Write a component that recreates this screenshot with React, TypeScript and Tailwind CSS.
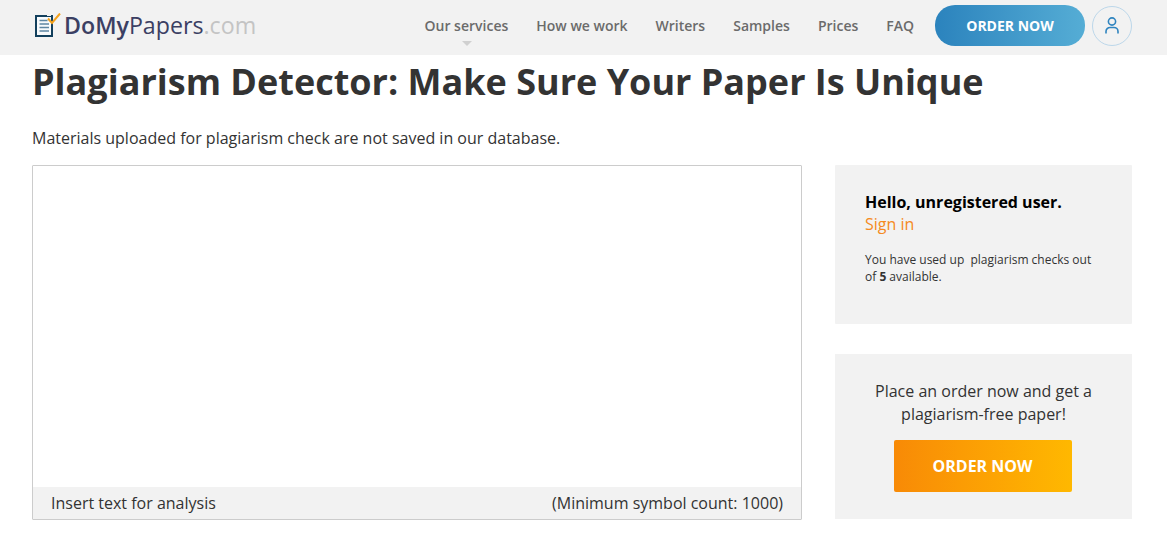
export default function App() {
  const font = { fontFamily: '"Open Sans", sans-serif' };
  return (
    <div className="w-[1167px] h-[543px] overflow-hidden bg-white text-[#333] relative" style={font}>
      <header className="h-[55px] bg-[#f2f2f2] flex items-center pl-[35px] pr-[35px] pb-[4px]">
        <div className="flex items-center gap-[3px]">
          <svg width="26" height="25" viewBox="0 0 26 25" className="mt-[-1px]">
            <rect x="1" y="3" width="16" height="20" fill="#f7fafc" stroke="#123f5c" strokeWidth="2" />
            <path d="M4.5 7.5h8M4.5 11h9.5M4.5 14.5h9.5M4.5 18h9.5" stroke="#5f87a3" strokeWidth="1.5" />
            <path d="M12 1h4v2h-4z" fill="#f2f2f2" />
            <path d="M13 5.5l4 4.5 8-9.5" fill="none" stroke="#f5a21c" strokeWidth="2" />
          </svg>
          <div className="text-[23.2px] leading-none text-[#3b3f63]">
            <span className="font-semibold">DoMy</span>
            <span>Papers</span>
            <span className="text-[#c4c4c4]">.com</span>
          </div>
        </div>
        <nav className="ml-auto flex items-center gap-[28px] text-[14px] font-semibold text-[#6b6b6b]">
          <a className="relative">
            Our services
            <span className="absolute left-[37px] top-[26px] w-0 h-0 border-l-[5px] border-r-[5px] border-t-[5px] border-l-transparent border-r-transparent border-t-[#d0d0d0]" />
          </a>
          <a>How we work</a>
          <a>Writers</a>
          <a>Samples</a>
          <a>Prices</a>
          <a>FAQ</a>
        </nav>
        <button className="ml-[21px] w-[150px] h-[41px] rounded-[20px] bg-gradient-to-r from-[#2b83bd] to-[#55add5] text-white text-[14px] font-bold">
          ORDER NOW
        </button>
        <div className="ml-[7px] w-[40px] h-[40px] rounded-full border border-[#bcd7ea] flex items-center justify-center">
          <svg width="14" height="17" viewBox="0 0 14 17" fill="none" stroke="#2f84bf" strokeWidth="1.6">
            <circle cx="7" cy="4.5" r="3.6" />
            <path d="M1 16.5v-2a4 4 0 0 1 4-4h4a4 4 0 0 1 4 4v2" />
          </svg>
        </div>
      </header>
      <main className="pl-[32px] pr-[35px]">
        <h1 className="mt-[2px] text-[36px] leading-[50px] font-bold text-[#333]">
          Plagiarism Detector: Make Sure Your Paper Is Unique
        </h1>
        <p className="mt-[20px] text-[16px] leading-[22px] text-[#333]">
          Materials uploaded for plagiarism check are not saved in our database.
        </p>
        <div className="mt-[16px] flex justify-between">
          <div className="w-[770px] h-[355px] border border-[#ccc] flex flex-col justify-end rounded-[1px]">
            <div className="h-[32px] bg-[#f2f2f2] flex items-center justify-between px-[18px] text-[16px] text-[#333]">
              <span>Insert text for analysis</span>
              <span>(Minimum symbol count: 1000)</span>
            </div>
          </div>
          <aside className="w-[297px] flex flex-col gap-[30px]">
            <div className="h-[159px] bg-[#f2f2f2] rounded-[1px] px-[30px] pt-[26px]">
              <div className="text-[16px] leading-[22px] font-bold text-black">Hello, unregistered user.</div>
              <div className="text-[16px] leading-[23px] text-[#f58a21]">Sign in</div>
              <p className="mt-[15px] text-[12px] leading-[17px] text-[#333] whitespace-pre-wrap">
                You have used up  plagiarism checks out of <b className="font-bold">5</b> available.
              </p>
            </div>
            <div className="h-[165px] bg-[#f2f2f2] pt-[26px] flex flex-col items-center">
              <p className="w-[240px] text-center text-[16px] leading-[22.5px] text-[#333]">
                Place an order now and get a plagiarism-free paper!
              </p>
              <button className="mt-[15px] mr-[2px] w-[178px] h-[52px] rounded-[2px] bg-gradient-to-r from-[#f88a06] to-[#ffb800] text-white text-[16px] font-bold">
                ORDER NOW
              </button>
            </div>
          </aside>
        </div>
      </main>
    </div>
  );
}
